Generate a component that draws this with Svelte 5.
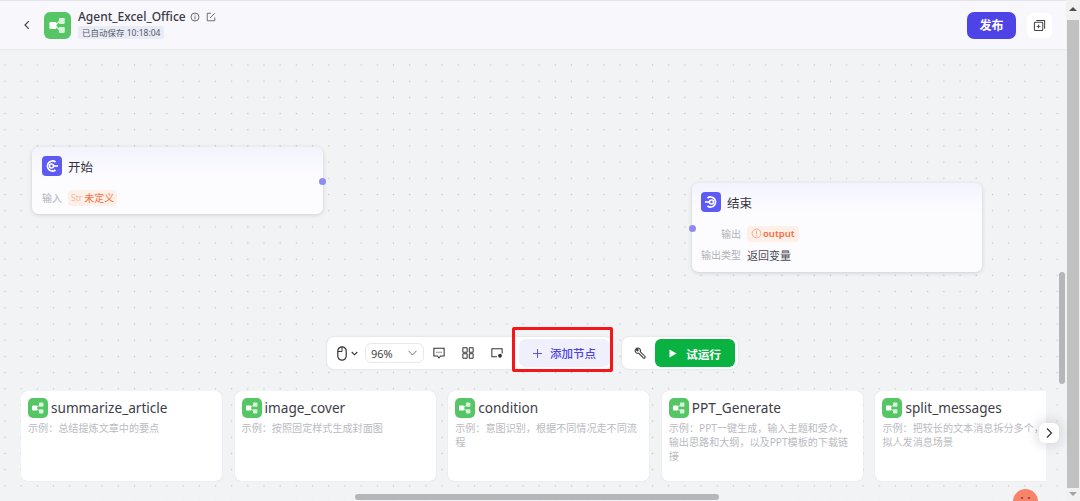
<script>
	// the example cards along the bottom
	const cards = [
		{ name: "summarize_article", desc: "示例：总结提炼文章中的要点" },
		{ name: "image_cover", desc: "示例：按照固定样式生成封面图" },
		{ name: "condition", desc: "示例：意图识别，根据不同情况走不同流程" },
		{ name: "PPT_Generate", desc: "示例：PPT一键生成，输入主题和受众，输出思路和大纲，以及PPT模板的下载链接" },
		{ name: "split_messages", desc: "示例：把较长的文本消息拆分多个，\n拟人发消息场景" }
	];
</script>

{#snippet logo(cls)}
	<span class="logo {cls}">
		<svg viewBox="0 0 20 20" width="100%" height="100%">
			<path d="M8 10 L12 6.5 M8 10 L12 13.5" stroke="#d6f3da" stroke-width="1" />
			<rect x="4" y="7.4" width="5.2" height="5.2" rx="0.8" fill="#fff" />
			<rect x="11" y="4.4" width="4.4" height="4.4" rx="0.8" fill="#d6f3da" />
			<rect x="11" y="11.2" width="4.4" height="4.4" rx="0.8" fill="#d6f3da" />
		</svg>
	</span>
{/snippet}

<div class="page">
	<div class="main">
		<header>
			<button class="back" aria-label="back">
				<svg viewBox="0 0 12 12" width="12" height="12"><path d="M7.8 2.2 L4 6 L7.8 9.8" fill="none" stroke="#444" stroke-width="1.2" /></svg>
			</button>
			{@render logo("big")}
			<div class="title">
				<div class="title-row">
					<span class="app-name">Agent_Excel_Office</span>
					<svg viewBox="0 0 12 12" width="10" height="10"><circle cx="6" cy="6" r="4.8" fill="none" stroke="#555" /><path d="M6 5.2 V9 M6 3 V4.2" stroke="#555" /></svg>
					<svg class="edit" viewBox="0 0 12 12" width="10" height="10"><path d="M10.5 6.5 V10.5 H1.5 V1.5 H6" fill="none" stroke="#555" /><path d="M5 7 L10.5 1.5" stroke="#555" /></svg>
				</div>
				<span class="saved">已自动保存 10:18:04</span>
			</div>
			<button class="publish">发布</button>
			<button class="copy" aria-label="copy">
				<svg viewBox="0 0 14 14" width="13" height="13"><rect x="1.5" y="3.5" width="9" height="9" rx="1" fill="none" stroke="#444" stroke-width="1.1" /><path d="M3.5 1.5 H12.5 V10.5" fill="none" stroke="#444" stroke-width="1.1" /><path d="M6 6 V10 M4 8 H8" stroke="#444" /></svg>
			</button>
		</header>

		<div class="canvas">
			<div class="node start">
				<div class="node-head">
					<span class="node-icon">
						<svg viewBox="0 0 20 20" width="20" height="20"><path d="M13.5 6 A5 5 0 1 0 13.5 14" fill="none" stroke="#fff" stroke-width="1.8" /><circle cx="9.5" cy="10" r="2" fill="none" stroke="#fff" stroke-width="1.5" /><path d="M11 10 H16" stroke="#fff" stroke-width="1.6" /></svg>
					</span>
					<span class="node-title">开始</span>
				</div>
				<div class="node-row">
					<span class="label">输入</span>
					<span class="tag"><span class="str">Str</span>未定义</span>
				</div>
				<span class="port right"></span>
			</div>

			<div class="node end">
				<div class="node-head">
					<span class="node-icon">
						<svg viewBox="0 0 20 20" width="20" height="20"><path d="M6.5 6 A5 5 0 1 1 6.5 14" fill="none" stroke="#fff" stroke-width="1.8" /><circle cx="10.5" cy="10" r="2" fill="none" stroke="#fff" stroke-width="1.5" /><path d="M4 10 H9" stroke="#fff" stroke-width="1.6" /></svg>
					</span>
					<span class="node-title">结束</span>
				</div>
				<div class="node-row">
					<span class="label wide">输出</span>
					<span class="tag bold">
						<svg viewBox="0 0 12 12" width="11" height="11"><circle cx="6" cy="6" r="4.8" fill="none" stroke="#f7a58a" /><path d="M6 3 V7 M6 8 V9" stroke="#f7a58a" /></svg>output
					</span>
				</div>
				<div class="node-row">
					<span class="label wide">输出类型</span>
					<span class="value">返回变量</span>
				</div>
				<span class="port left"></span>
			</div>

			<div class="toolbar">
				<div class="tools">
					<svg viewBox="0 0 10 15" width="10" height="15"><rect x="0.8" y="0.8" width="8.4" height="13.4" rx="4.2" fill="none" stroke="#333" stroke-width="1.2" /><path d="M5 0.8 V5.5 M0.8 5.5 H5" stroke="#333" stroke-width="1" /></svg>
					<svg class="caret" viewBox="0 0 7 7" width="7" height="7"><path d="M0.7 2 L3.5 4.8 L6.3 2" fill="none" stroke="#333" stroke-width="1.1" /></svg>
					<span class="zoom-box">
						96%
						<svg viewBox="0 0 9 6" width="9" height="6"><path d="M0.5 0.8 L4.5 5 L8.5 0.8" fill="none" stroke="#777" /></svg>
					</span>
					<svg class="tool one" viewBox="0 0 14 14" width="12" height="12"><path d="M1 1.5 H13 V10.5 H8.8 L7 12.8 L5.2 10.5 H1 Z" fill="none" stroke="#333" stroke-width="1.2" /><path d="M4 6 H5.2 M6.4 6 H7.6 M8.8 6 H10" stroke="#333" stroke-width="1.2" /></svg>
					<svg class="tool two" viewBox="0 0 14 14" width="12" height="12"><rect x="1" y="1" width="5" height="5" rx="0.5" fill="none" stroke="#333" stroke-width="1.2" /><rect x="8.5" y="1" width="4.5" height="5" rx="0.5" fill="none" stroke="#333" stroke-width="1.2" /><rect x="1" y="8" width="5" height="5" rx="0.5" fill="none" stroke="#333" stroke-width="1.2" /><rect x="8.5" y="8" width="4.5" height="5" rx="0.5" fill="none" stroke="#333" stroke-width="1.2" /></svg>
					<svg class="tool three" viewBox="0 0 14 14" width="12" height="12"><path d="M7 11.5 H1 V2 H13 V7.5" fill="none" stroke="#333" stroke-width="1.2" /><circle cx="10.5" cy="10.2" r="2.2" fill="#333" /></svg>
					<button class="add">
						<svg viewBox="0 0 9 9" width="9" height="9"><path d="M4.5 0 V9 M0 4.5 H9" stroke="#4d43e6" stroke-width="0.9" /></svg>
						添加节点
					</button>
				</div>
				<div class="tools run-box">
					<svg viewBox="0 0 14 14" width="12" height="12"><path d="M2 2.6 L4 4.6 L5 3.6 L3.1 1.5 A3 3 0 0 1 7.2 5.4 L12.6 10.8 A1.2 1.2 0 0 1 10.8 12.6 L5.4 7.2 A3 3 0 0 1 2 2.6 Z" fill="none" stroke="#333" stroke-width="1.2" /></svg>
					<button class="run">
						<svg viewBox="0 0 8 9" width="8" height="9"><path d="M0.5 0.5 L7.5 4.5 L0.5 8.5 Z" fill="#fff" /></svg>
						试运行
					</button>
				</div>
			</div>
			<div class="highlight"></div>

			<div class="cards">
				{#each cards as card}
					<div class="card">
						<div class="card-head">
							{@render logo("small")}
							<span class="card-name">{card.name}</span>
						</div>
						<p>{card.desc}</p>
					</div>
				{/each}
			</div>
			<button class="next" aria-label="next">
				<svg viewBox="0 0 12 12" width="12" height="12"><path d="M4 1.5 L8.5 6 L4 10.5" fill="none" stroke="#333" stroke-width="1.2" /></svg>
			</button>

			<div class="inner-thumb"></div>
			<div class="h-thumb"></div>
			<div class="blob"><i></i><i></i></div>
		</div>
	</div>

	<div class="scrollbar">
		<span class="arrow up"></span>
		<div class="thumb"></div>
		<span class="arrow down"></span>
	</div>
</div>

<style>
	:global(body) {
		margin: 0;
		font-family: "Noto Sans", "Noto Sans CJK SC", sans-serif;
		overflow: hidden;
	}

	button {
		border: none;
		padding: 0;
		font-family: inherit;
	}

	.page {
		display: flex;
		width: 1080px;
		height: 501px;
		overflow: hidden;
	}

	.main {
		flex: 1;
		display: flex;
		flex-direction: column;
		min-width: 0;
	}

	header {
		height: 48px;
		flex: none;
		display: flex;
		align-items: center;
		background: #f7f7fc;
		border-top: 1px solid #e4e4e8;
		border-bottom: 1px solid #ebebef;
		padding-left: 21px;
		padding-right: 14px;
	}

	.back {
		width: 12px;
		height: 12px;
		background: none;
		margin-right: 11px;
		display: flex;
	}

	.logo {
		display: block;
		background: #55c566;
		flex: none;
	}

	.logo.big {
		width: 27px;
		height: 27px;
		border-radius: 6px;
	}

	.logo.small {
		width: 20px;
		height: 20px;
		border-radius: 5px;
	}

	.title {
		margin-left: 7px;
		margin-bottom: 3px;
		display: flex;
		flex-direction: column;
		align-items: flex-start;
		gap: 1px;
	}

	.title-row {
		display: flex;
		align-items: center;
		gap: 4px;
		height: 17px;
	}

	.app-name {
		font-size: 12px;
		font-weight: 500;
		color: #3a3a44;
	}

	.edit {
		margin-left: 2px;
	}

	.saved {
		font-size: 8.5px;
		line-height: 13px;
		color: #555a66;
		background: #e9ecf6;
		border-radius: 3px;
		padding: 0 4px;
	}

	.publish {
		margin-left: auto;
		width: 49px;
		height: 27px;
		background: #4d43e6;
		color: #fff;
		border-radius: 7px;
		font-size: 12px;
		font-weight: 700;
	}

	.copy {
		margin-left: 11px;
		width: 25px;
		height: 25px;
		background: #fff;
		border-radius: 6px;
		display: flex;
		align-items: center;
		justify-content: center;
	}

	.canvas {
		flex: 1;
		position: relative;
		background-color: #f2f3f5;
		background-image: radial-gradient(circle, #c0c2c8 0.7px, transparent 1px);
		background-size: 16.2px 16.2px;
		background-position: -3.1px 6.9px;
	}

	.node {
		position: absolute;
		background: linear-gradient(#f3f3fe 0, #fcfcff 30px);
		border-radius: 7px;
		box-shadow: 0 1px 4px rgba(60, 60, 90, 0.2);
		box-sizing: border-box;
		padding: 9px 10px;
	}

	.node.start {
		left: 32px;
		top: 97px;
		width: 291px;
		height: 67px;
	}

	.node.end {
		left: 692px;
		top: 133px;
		width: 290px;
		height: 89px;
		padding-left: 9px;
	}

	.node-head {
		display: flex;
		align-items: center;
		gap: 6px;
		height: 20px;
		margin-bottom: 13px;
	}

	.node-icon {
		width: 20px;
		height: 20px;
		border-radius: 4px;
		background: #5d5bf3;
		display: block;
	}

	.node-title {
		font-size: 12.5px;
		color: #33333c;
	}

	.node-row {
		display: flex;
		align-items: center;
		height: 17px;
		margin-bottom: 4px;
		font-size: 10px;
		gap: 6px;
	}

	.label {
		color: #b0b2b7;
	}

	.label.wide {
		width: 40px;
		text-align: right;
	}

	.tag {
		display: inline-flex;
		align-items: center;
		gap: 2px;
		height: 16px;
		padding: 0 3px;
		background: #fdf0e8;
		border-radius: 4px;
		color: #f56d43;
	}

	.tag.bold {
		font-weight: 600;
		font-size: 9.5px;
		padding: 0 4px;
		gap: 1px;
	}

	.str {
		color: #f3b7a2;
		font-size: 8.5px;
	}

	.value {
		font-size: 11px;
		color: #4a4a52;
	}

	.port {
		position: absolute;
		width: 7px;
		height: 7px;
		border-radius: 50%;
		background: #8f8bf5;
	}

	.port.right {
		right: -3px;
		top: 31px;
	}

	.port.left {
		left: -3px;
		top: 42px;
	}

	.toolbar {
		position: absolute;
		left: 327px;
		top: 287px;
		display: flex;
		gap: 10px;
	}

	.tools {
		height: 32px;
		background: #fff;
		border-radius: 7px;
		box-shadow: 0 0 2px rgba(60, 60, 90, 0.2);
		display: flex;
		align-items: center;
		padding-left: 10px;
		padding-right: 2px;
	}

	.caret {
		margin-left: 4px;
	}

	.zoom-box {
		margin-left: 7px;
		width: 59px;
		height: 20px;
		box-sizing: border-box;
		border: 1px solid #e8e8ec;
		border-radius: 6px;
		font-size: 11px;
		color: #444;
		display: flex;
		align-items: center;
		justify-content: space-between;
		padding: 0 6px 0 5px;
	}

	.tool.one {
		margin-left: 9px;
	}

	.tool.two {
		margin-left: 17px;
	}

	.tool.three {
		margin-left: 17px;
	}

	.add {
		margin-left: 16px;
		width: 91px;
		height: 28px;
		background: #f0f0fd;
		border-radius: 7px;
		color: #4d43e6;
		font-size: 11.5px;
		font-weight: 500;
		display: flex;
		align-items: center;
		justify-content: center;
		gap: 8px;
	}

	.run-box {
		padding-left: 12px;
		padding-right: 3px;
	}

	.run {
		margin-left: 9px;
		width: 80px;
		height: 28px;
		background: #0ab242;
		color: #fff;
		border-radius: 6px;
		font-size: 11.7px;
		font-weight: 600;
		display: flex;
		align-items: center;
		justify-content: center;
		gap: 9px;
	}

	.highlight {
		position: absolute;
		left: 512px;
		top: 277px;
		width: 101px;
		height: 45px;
		box-sizing: border-box;
		border: 3px solid #f5161c;
		border-radius: 2px;
	}

	.cards {
		position: absolute;
		left: 21px;
		top: 341px;
		width: 1025px;
		height: 91px;
		overflow: hidden;
		display: flex;
		gap: 12.6px;
	}

	.card {
		flex: none;
		width: 201px;
		height: 90px;
		box-sizing: border-box;
		background: #fff;
		border-radius: 6px;
		box-shadow: 0 0 1px rgba(60, 60, 90, 0.25);
		padding: 7px 7px;
	}

	.card-head {
		display: flex;
		align-items: center;
		gap: 3px;
		height: 20px;
	}

	.card-name {
		font-size: 13.6px;
		color: #3d3d46;
		margin-bottom: 2px;
	}

	.card p {
		margin: 4px 0 0;
		font-size: 10.1px;
		line-height: 13.8px;
		color: #b9bbbf;
		white-space: pre-line;
	}

	.next {
		position: absolute;
		left: 1039px;
		top: 373px;
		width: 20px;
		height: 20px;
		background: #fff;
		border-radius: 6px;
		box-shadow: 0 0 10px 4px rgba(120, 120, 140, 0.18);
		display: flex;
		align-items: center;
		justify-content: center;
	}

	.inner-thumb {
		position: absolute;
		left: 1059px;
		top: 222px;
		width: 6px;
		height: 112px;
		background: #b5b6ba;
		border-radius: 3px;
	}

	.h-thumb {
		position: absolute;
		left: 355px;
		top: 444px;
		width: 364px;
		height: 6px;
		background: #b5b6ba;
		border-radius: 3px;
	}

	.blob {
		position: absolute;
		left: 1013px;
		top: 439px;
		width: 25px;
		height: 25px;
		border-radius: 50%;
		background: #f7836a;
		display: flex;
		justify-content: center;
		gap: 5px;
		padding-top: 8px;
		box-sizing: border-box;
	}

	.blob i {
		width: 2px;
		height: 2px;
		border-radius: 50%;
		background: #7a3a2c;
	}

	.scrollbar {
		width: 14px;
		flex: none;
		background: #f1f1f1;
		display: flex;
		flex-direction: column;
		align-items: center;
	}

	.thumb {
		width: 12px;
		height: 468px;
		background: #c1c1c1;
	}

	.arrow {
		flex: none;
		width: 0;
		height: 0;
		border-left: 4px solid transparent;
		border-right: 4px solid transparent;
	}

	.arrow.up {
		margin: 7px 0 9px;
		border-bottom: 4px solid #505050;
	}

	.arrow.down {
		margin-top: 4px;
		border-top: 4px solid #a3a3a3;
	}
</style>
